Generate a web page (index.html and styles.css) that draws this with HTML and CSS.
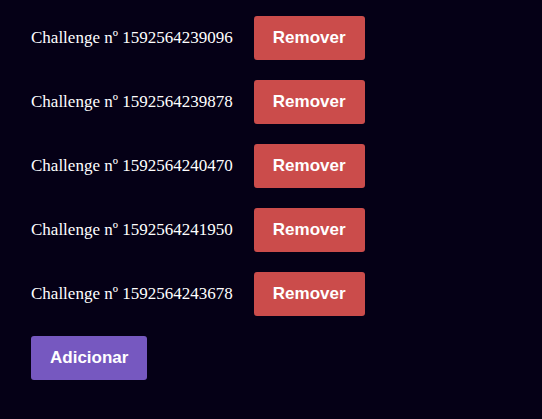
FILE: index.html
```html
<!DOCTYPE html>
<html>
<head>
<meta charset="utf-8">
<link rel="stylesheet" href="styles.css">
</head>
<body>
<div class="list">
  <div class="row"><span class="label">Challenge nº 1592564239096</span><button class="btn remove">Remover</button></div>
  <div class="row"><span class="label">Challenge nº 1592564239878</span><button class="btn remove">Remover</button></div>
  <div class="row"><span class="label">Challenge nº 1592564240470</span><button class="btn remove">Remover</button></div>
  <div class="row"><span class="label">Challenge nº 1592564241950</span><button class="btn remove">Remover</button></div>
  <div class="row"><span class="label">Challenge nº 1592564243678</span><button class="btn remove">Remover</button></div>
  <div class="row"><button class="btn add">Adicionar</button></div>
</div>
</body>
</html>
```
FILE: styles.css
```css
html, body {
  margin: 0;
  background: #050016;
  height: 100%;
}
.list {
  display: flex;
  flex-direction: column;
  gap: 20px;
  padding: 16px 31px;
}
.row {
  display: flex;
  align-items: center;
  gap: 21px;
  height: 44px;
}
.label {
  font-family: "Liberation Serif", "Times New Roman", serif;
  font-size: 17px;
  color: #ffffff;
}
.btn {
  font-family: "Liberation Sans", Arial, sans-serif;
  font-weight: bold;
  font-size: 17px;
  color: #ffffff;
  border: none;
  border-radius: 3px;
  height: 44px;
  padding: 0 19px;
  cursor: pointer;
}
.remove {
  background: #cb4c4b;
  width: 111px;
}
.add {
  background: #7658c0;
  width: 116px;
}
```
